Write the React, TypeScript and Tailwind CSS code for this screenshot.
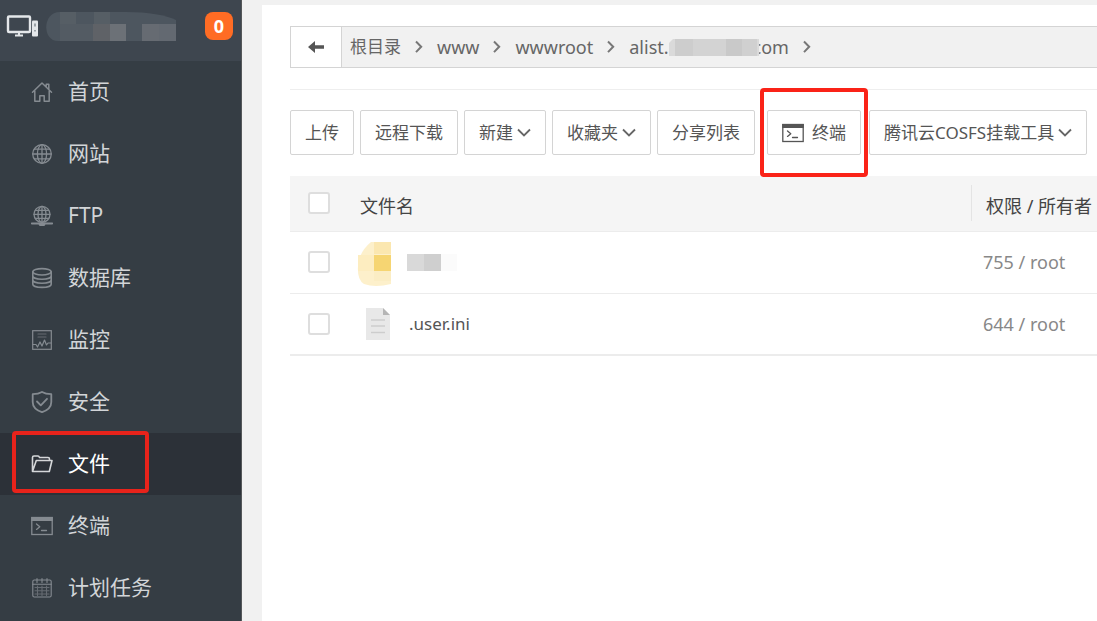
import type { ReactNode } from 'react';
import clsx from 'clsx';

type IconProps = { className?: string };

function Stroke({ className, width = 1.3, children }: IconProps & { width?: number; children: ReactNode }) {
  return (
    <svg
      viewBox="0 0 22 22"
      fill="none"
      stroke="currentColor"
      strokeWidth={width}
      strokeLinejoin="round"
      strokeLinecap="round"
      className={clsx('size-[22px] shrink-0', className)}
      aria-hidden="true"
    >
      {children}
    </svg>
  );
}

const HomeIcon = () => (
  <Stroke width={1.5}>
    <path d="M1.5 11.2 11 2l9.5 9.2M15.2 5.8V3.2h2.6v5M3.800 9.800v10.400h5v-5.500h4.400v5.500h5V9.800" />
  </Stroke>
);

const GlobeIcon = () => (
  <Stroke width={1.3}>
    <circle cx="11" cy="11" r="9.3" />
    <ellipse cx="11" cy="11" rx="4.6" ry="9.3" />
    <path d="M11 1.7v18.6M1.7 11h18.6M3.2 6.2h15.6M3.2 15.8h15.6" />
  </Stroke>
);

const FtpIcon = () => (
  <Stroke width={1.3}>
    <circle cx="11" cy="9.3" r="8" />
    <ellipse cx="11" cy="9.3" rx="4" ry="8" />
    <path d="M11 1.3v16M3 9.3h16M4.4 5.3h13.2M4.4 13.3h13.2" />
    <path d="M.8 18.4h20.4" strokeWidth="2" />
    <path d="M9 19.6h4" strokeWidth="2.6" />
  </Stroke>
);

const DatabaseIcon = () => (
  <Stroke width={1.6}>
    <ellipse cx="11" cy="4.8" rx="9.2" ry="3.2" />
    <path d="M1.8 4.8v12.4c0 1.8 4.1 3.2 9.2 3.2s9.2-1.4 9.2-3.2V4.8M1.8 9c0 1.8 4.1 3.2 9.2 3.2s9.2-1.4 9.2-3.2M1.8 13.1c0 1.8 4.1 3.2 9.2 3.2s9.2-1.4 9.2-3.2" />
  </Stroke>
);

const MonitorIcon = () => (
  <Stroke width={1.2}>
    <rect x="1.7" y="1.7" width="18.6" height="18.6" strokeLinejoin="miter" />
    <path d="M2 15.500h3l1.500 2.500 2.500-5 2 4 2.500-6 2 5 1.500-2H20" />
    <path d="M7 5h8M7 8h8" opacity=".6" />
  </Stroke>
);

const ShieldIcon = () => (
  <Stroke width={1.8}>
    <path d="M11 .9c2.600 1.700 5.600 2.300 9.300 2.300V11c0 5-4 8.400-9.300 10.200C5.700 19.400 1.700 16 1.700 11V3.200C5.400 3.200 8.400 2.600 11 .9Z" />
    <path d="m6 10.500 3.800 3.800L16 7.800" />
  </Stroke>
);

const FolderIcon = () => (
  <Stroke width={1.6}>
    <path d="M1.500 18.500V4.500q0-1.500 1.500-1.500h4q1 0 1.500 1.500h8.500q1.500 0 1.500 1.500v1.500M1.500 18.500 5.300 7.500H21l-2.700 11Z" />
  </Stroke>
);

function TerminalIcon({ className }: IconProps) {
  return (
    <Stroke className={className} width={1.3}>
      <rect x=".8" y="2.5" width="20.4" height="17" strokeLinejoin="miter" />
      <path d="M.2 4h21.600" strokeWidth="4" strokeLinecap="butt" />
      <path d="m5.500 9 3.300 2.700-3.300 2.700M10.500 15.500h5" />
    </Stroke>
  );
}

const CalendarIcon = () => (
  <Stroke width={1.1}>
    <rect x="1.8" y="3" width="18.4" height="17" rx="1.5" />
    <path d="M1.8 7.300h18.400M6 1.500v4M11 1.500v4M16 1.500v4" />
    <path d="M4 10.500h14M4 13.700h14M4 17h14M6.500 9v9.500M11 9v9.500M15.500 9v9.500" opacity=".6" />
  </Stroke>
);

function ChevronRight() {
  return (
    <svg viewBox="0 0 8 14" className="h-3.5 w-2 shrink-0" fill="none" stroke="#777" strokeWidth="2" aria-hidden="true">
      <path d="m1 1.500 5.200 5.300L1 12.100" />
    </svg>
  );
}

function ChevronDown() {
  return (
    <svg viewBox="0 0 14 10" className="h-2.5 w-3.5 shrink-0" fill="none" stroke="#666" strokeWidth="1.8" aria-hidden="true">
      <path d="m1 1.500 6 6 6-6" />
    </svg>
  );
}

const menu = [
  { label: '首页', icon: <HomeIcon /> },
  { label: '网站', icon: <GlobeIcon /> },
  { label: 'FTP', icon: <FtpIcon /> },
  { label: '数据库', icon: <DatabaseIcon /> },
  { label: '监控', icon: <MonitorIcon /> },
  { label: '安全', icon: <ShieldIcon /> },
  { label: '文件', icon: <FolderIcon />, active: true },
  { label: '终端', icon: <TerminalIcon /> },
  { label: '计划任务', icon: <CalendarIcon /> },
];

const tools = [
  { label: '上传' },
  { label: '远程下载' },
  { label: '新建', dropdown: true },
  { label: '收藏夹', dropdown: true },
  { label: '分享列表' },
  { label: '终端', terminal: true },
  { label: '腾讯云COSFS挂载工具', dropdown: true },
];

function Sidebar() {
  return (
    <aside className="w-[242px] shrink-0 border-r border-[#55585a] bg-[#353d44]">
      <div className="flex h-[61px] items-start bg-[#3e464f] pl-1.5 pr-2 pt-3">
        <svg viewBox="0 0 32 24" className="mt-0.5 h-6 w-8 shrink-0" fill="none" stroke="#e4e7ea" aria-hidden="true">
          <rect x="2" y="2.500" width="22" height="15.500" rx="1" strokeWidth="2.400" />
          <path d="M9 21.500h8M13 19v2" strokeWidth="2" />
          <rect x="26" y="6.500" width="6" height="16" rx="1" fill="#e4e7ea" stroke="none" />
          <path d="M29 9.500v3M29 16v1.500" stroke="#7d858c" strokeWidth="1.400" />
        </svg>
        <svg viewBox="0 0 130 29" className="ml-2 h-[29px] w-[130px]" aria-hidden="true">
          <path d="M14 0h66c22 0 40 3 50 8v21H12C-4 29-4 0 14 0Z" fill="#4d565f" />
          <path fill="#565e65" d="M14 0h16v12H14zM48 0h16v12H48z" />
          <path fill="#535b63" d="M14 12h16v17H14zM30 12h17v17H30z" />
          <path fill="#5f6267" d="M47 12h17v17H47z" />
          <path fill="#6c7177" d="M64 12h16v17H64z" />
          <path fill="#666b72" d="M96 12h17v17H96z" />
          <path fill="#636971" d="M113 12h17v17h-17z" />
        </svg>
        <span className="ml-auto flex h-7 w-7 items-center justify-center rounded-lg bg-[#ff6c24] text-lg font-bold text-white">
          0
        </span>
      </div>
      <nav>
        {menu.map((item) => (
          <a
            key={item.label}
            href="#"
            className={clsx(
              'relative flex h-[62px] items-center gap-[15px] pl-[31px] text-[21px]',
              item.active ? 'bg-[#2c3138] text-white' : 'text-[#d2d5d8]',
            )}
          >
            <span className={item.active ? 'text-[#d5d7d9]' : 'text-[#858b91]'}>{item.icon}</span>
            {item.label}
            {item.active && (
              <span className="pointer-events-none absolute -top-0.5 left-3 h-[62px] w-[137px] rounded border-4 border-[#e8231b]" />
            )}
          </a>
        ))}
      </nav>
    </aside>
  );
}

function PathBar() {
  return (
    <div className="flex h-[42px] border border-r-0 border-[#d4d4d4] bg-[#f1f1f1] text-lg text-[#666]">
      <button type="button" aria-label="返回" className="flex w-[51px] items-center justify-center border-r border-[#d4d4d4] bg-white">
        <svg viewBox="0 0 18 14" className="h-3.5 w-[18px]" aria-hidden="true">
          <path d="M1 7 8 1v4.200h9v3.600H8V13Z" fill="#555" />
        </svg>
      </button>
      <nav className="flex items-center gap-3.5 whitespace-nowrap pl-2">
        <a href="#" className="text-[17px]">根目录</a>
        <ChevronRight />
        <a href="#">www</a>
        <ChevronRight />
        <a href="#">wwwroot</a>
        <ChevronRight />
        <a href="#" className="flex items-center">
          alist.
          <svg viewBox="0 0 90 17" className="z-10 h-[17px] w-[90px]" aria-hidden="true">
            <path fill="#dadada" d="M4 0h86v17H0V4z" />
            <path fill="#cdcdcd" d="M6 0h18v17H6z" />
            <path fill="#d3d3d3" d="M24 0h33v17H24z" />
            <path fill="#c9c9c9" d="M57 0h16v17H57z" />
            <path fill="#d0d0d0" d="M73 0h15v17H73z" />
          </svg>
          <span className="-ml-1.5">com</span>
        </a>
        <ChevronRight />
      </nav>
    </div>
  );
}

function Toolbar() {
  return (
    <div className="mt-[21px] flex gap-1.5 border-t border-[#eee] pb-[21px] pt-5">
      {tools.map((tool) => (
        <button
          key={tool.label}
          type="button"
          className={clsx(
            'relative flex h-[45px] shrink-0 items-center whitespace-nowrap rounded-xs border border-[#d4d4d4] bg-white px-3.5 text-[17px] text-[#555]',
            tool.terminal && 'ml-1.5 mr-0.5 gap-2',
          )}
        >
          {tool.terminal && <TerminalIcon />}
          {tool.label}
          {tool.dropdown && <span className="ml-1"><ChevronDown /></span>}
          {tool.terminal && (
            <span className="pointer-events-none absolute -inset-x-2 -bottom-[23px] -top-[23px] rounded border-4 border-[#fa2318]" />
          )}
        </button>
      ))}
    </div>
  );
}

function Checkbox({ label }: { label: string }) {
  return (
    <input
      type="checkbox"
      aria-label={label}
      className="block size-[22px] appearance-none rounded-[3px] border-2 border-[#dedede] bg-white checked:bg-[#20a53a]"
    />
  );
}

function FileTable() {
  return (
    <table className="w-full table-fixed text-left text-lg">
      <colgroup>
        <col className="w-[67px]" />
        <col />
        <col className="w-[126px]" />
      </colgroup>
      <thead>
        <tr className="h-[55px] border-b border-[#ececec] bg-[#f5f5f5] text-[#444]">
          <th className="pl-[18px]">
            <Checkbox label="全选" />
          </th>
          <th className="pl-[3px] pt-1.5 font-normal">文件名</th>
          <th className="whitespace-nowrap font-normal">
            <div className="border-l border-[#e4e4e4] pl-3.5 pt-1.5 leading-[30px]">权限 / 所有者</div>
          </th>
        </tr>
      </thead>
      <tbody className="text-[#555]">
        <tr className="h-[62px] border-b border-[#ececec]">
          <td className="pl-[18px]">
            <Checkbox label="选择文件夹" />
          </td>
          <td>
            <div className="flex items-center">
              <svg viewBox="0 0 34 44" className="mt-1 h-11 w-[34px]" aria-hidden="true">
                <path d="M14 0h20v42q-16 4-27 0Q0 38 1 24T14 0Z" fill="#fdf0cb" />
                <path d="M17 0h17v12H17z" fill="#fbe7b0" />
                <path d="M1 13h16v16H1z" fill="#fdedc0" />
                <path d="M17 13h17v16H17z" fill="#f6d572" />
                <path d="M17 29h17v10H17z" fill="#fbedc4" />
              </svg>
              <svg viewBox="0 0 50 17" className="ml-4 h-[17px] w-[50px]" aria-hidden="true">
                <path fill="#d9d9d9" d="M0 0h17v17H0z" />
                <path fill="#cfcfcf" d="M17 0h17v17H17z" />
                <path fill="#fbfbfb" d="M34 0h16v17H34z" />
              </svg>
            </div>
          </td>
          <td className="whitespace-nowrap pl-3 text-[#888]">755 / root</td>
        </tr>
        <tr className="h-[62px] border-b-2 border-[#ececec]">
          <td className="pl-[18px]">
            <Checkbox label="选择 .user.ini" />
          </td>
          <td>
            <div className="flex items-center pl-2">
              <svg viewBox="0 0 26 34" className="h-[34px] w-[26px]" aria-hidden="true">
                <path d="M1 1h17l7 7v25H1Z" fill="#e8e8e8" />
                <path d="m18 1 7 7h-7Z" fill="#b5b5b5" />
                <path d="M6 13h14M6 19h14M6 25.500h14" stroke="#cdcdcd" strokeWidth="1.600" />
              </svg>
              <a href="#" className="ml-[18px] text-[17px]">.user.ini</a>
            </div>
          </td>
          <td className="whitespace-nowrap pl-3 text-[#888]">644 / root</td>
        </tr>
      </tbody>
    </table>
  );
}

export default function App() {
  return (
    <div className="flex h-screen overflow-hidden bg-[#f1f1f1] font-['Noto_Sans','Noto_Sans_CJK_SC',sans-serif]">
      <Sidebar />
      <main className="ml-5 mt-[5px] min-w-0 flex-1 overflow-hidden bg-white pl-7 pt-[21px]">
        <PathBar />
        <Toolbar />
        <FileTable />
      </main>
    </div>
  );
}
